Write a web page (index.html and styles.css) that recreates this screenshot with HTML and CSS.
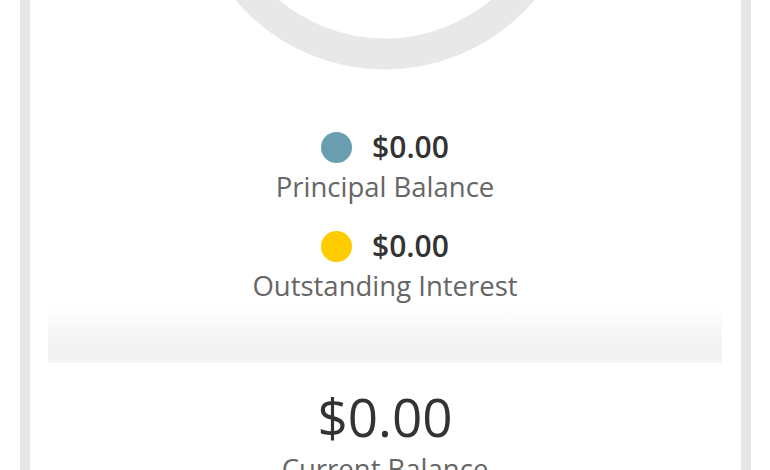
FILE: index.html
```html
<!DOCTYPE html>
<html lang="en">
<head>
<meta charset="utf-8">
<title>Balance</title>
<link rel="stylesheet" href="styles.css">
</head>
<body>
<div class="page">
  <section class="card">
    <div class="chart">
      <svg class="donut" width="400" height="72" viewBox="0 0 400 72" aria-hidden="true">
        <circle cx="200" cy="-126" r="180" fill="none" stroke="#e8e8e8" stroke-width="31"/>
      </svg>
    </div>
    <ul class="legend">
      <li class="legend-item">
        <div class="amount-row"><span class="dot dot-principal"></span><span class="amount">$0.00</span></div>
        <div class="label">Principal Balance</div>
      </li>
      <li class="legend-item">
        <div class="amount-row"><span class="dot dot-interest"></span><span class="amount">$0.00</span></div>
        <div class="label">Outstanding Interest</div>
      </li>
    </ul>
    <div class="band"></div>
    <div class="total">
      <div class="total-amount">$0.00</div>
      <div class="label">Current Balance</div>
    </div>
  </section>
</div>
</body>
</html>
```
FILE: styles.css
```css
* { box-sizing: border-box; }
html, body { margin: 0; padding: 0; background: #fff; }
body {
  font-family: "Open Sans", "Liberation Sans", sans-serif;
  color: #333;
  overflow: hidden;
  height: 470px;
}
.page {
  padding: 0 19px 0 20px;
}
.card {
  border-left: 10px solid #e6e6e6;
  border-right: 10px solid #e6e6e6;
  background: #fff;
  min-height: 470px;
  padding: 0 19px 0 18px;
}
.chart {
  display: flex;
  justify-content: center;
  height: 72px;
}
.donut { display: block; }
.legend {
  list-style: none;
  margin: 55px 0 0;
  padding: 0;
  display: flex;
  flex-direction: column;
  align-items: center;
  gap: 21px;
}
.legend-item {
  display: flex;
  flex-direction: column;
  align-items: center;
}
.amount-row {
  display: flex;
  align-items: center;
  gap: 20px;
  height: 40px;
}
.dot {
  width: 31px;
  height: 31px;
  border-radius: 50%;
  display: block;
}
.dot-principal { background: #689eb0; }
.dot-interest { background: #ffcc00; }
.amount {
  font-size: 30px;
  font-weight: 600;
  line-height: 40px;
  color: #333;
}
.label {
  font-size: 27.5px;
  line-height: 36px;
  color: #666;
}
.legend .label {
  padding-top: 2px;
}
.band {
  margin-top: 1px;
  height: 58px;
  background: linear-gradient(to bottom, #ffffff 0%, #f7f7f7 45%, #f1f1f1 92%, #f6f6f6 100%);
}
.total {
  margin-top: 24px;
  display: flex;
  flex-direction: column;
  align-items: center;
}
.total-amount {
  font-size: 53px;
  line-height: 60px;
  font-weight: 400;
  color: #333;
}
.total .label {
  margin-top: 4px;
}
```
